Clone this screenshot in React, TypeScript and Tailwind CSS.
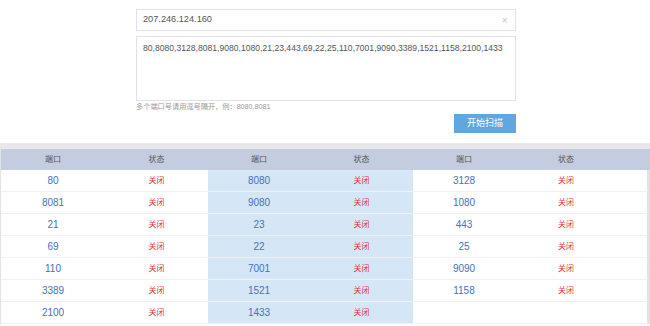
import React from "react";

const g1 = ["80", "8081", "21", "69", "110", "3389", "2100"];
const g2 = ["8080", "9080", "23", "22", "7001", "1521", "1433"];
const g3 = ["3128", "1080", "443", "25", "9090", "1158", ""];

const font = { fontFamily: '"Liberation Sans", "Noto Sans CJK SC", sans-serif' };

function Port({ v, blue }: { v: string; blue?: boolean }) {
  return (
    <div
      className={`flex items-center justify-center h-[22px] border-b border-[#eef1f5] text-[10px] text-[#4373b8] ${
        blue ? "bg-[#d5e7f7]" : "bg-white"
      }`}
    >
      {v}
    </div>
  );
}

function Status({ show, blue }: { show: boolean; blue?: boolean }) {
  return (
    <div
      className={`flex items-center justify-center h-[22px] border-b border-[#eef1f5] text-[8px] text-[#e0393e] ${
        blue ? "bg-[#d5e7f7]" : "bg-white"
      }`}
    >
      {show ? "关闭" : ""}
    </div>
  );
}

export default function App() {
  return (
    <div className="w-[650px] h-[326px] bg-white overflow-hidden relative" style={font}>
      <div className="h-[143px] flex flex-col pl-[136px] pt-[9px]">
        <div className="w-[380px] h-[22px] border border-[#dfe2e8] flex items-center justify-between px-[6px] text-[9.2px] text-[#555]">
          <span>207.246.124.160</span>
          <span className="text-[#c4c4c4] text-[11px] leading-none pr-[1px]">×</span>
        </div>
        <div className="w-[380px] h-[65px] mt-[5px] border border-[#dfe2e8] px-[6px] pt-[5px] text-[8.6px] text-[#555] leading-[12px]">
          80,8080,3128,8081,9080,1080,21,23,443,69,22,25,110,7001,9090,3389,1521,1158,2100,1433
        </div>
        <div className="mt-[1px] text-[7.2px] text-[#999] leading-[10px]">多个端口号请用逗号隔开，例：8080,8081</div>
        <div className="w-[380px] flex justify-end mt-[2px]">
          <div className="w-[62px] h-[19px] bg-[#62a6e0] text-white text-[9px] flex items-center justify-center">
            开始扫描
          </div>
        </div>
      </div>
      <div className="h-[6px] bg-[#e8e8ea]" />
      <div className="grid grid-cols-[104px_103px_102px_103px_102px_102px_1fr] border-l border-[#e4e4e4]">
        {["端口", "状态", "端口", "状态", "端口", "状态", ""].map((h, i) => (
          <div
            key={i}
            className="h-[21px] bg-[#c4cce0] flex items-center justify-center text-[8px] text-[#555]"
          >
            {h}
          </div>
        ))}
        {g1.map((_, r) => (
          <React.Fragment key={r}>
            <Port v={g1[r]} />
            <Status show />
            <Port v={g2[r]} blue />
            <Status show blue />
            <Port v={g3[r]} />
            <Status show={g3[r] !== ""} />
            <div className="h-[22px] border-b border-[#eef1f5] bg-white border-r-[3px] border-r-[#e2e2e2]" />
          </React.Fragment>
        ))}
      </div>
    </div>
  );
}
